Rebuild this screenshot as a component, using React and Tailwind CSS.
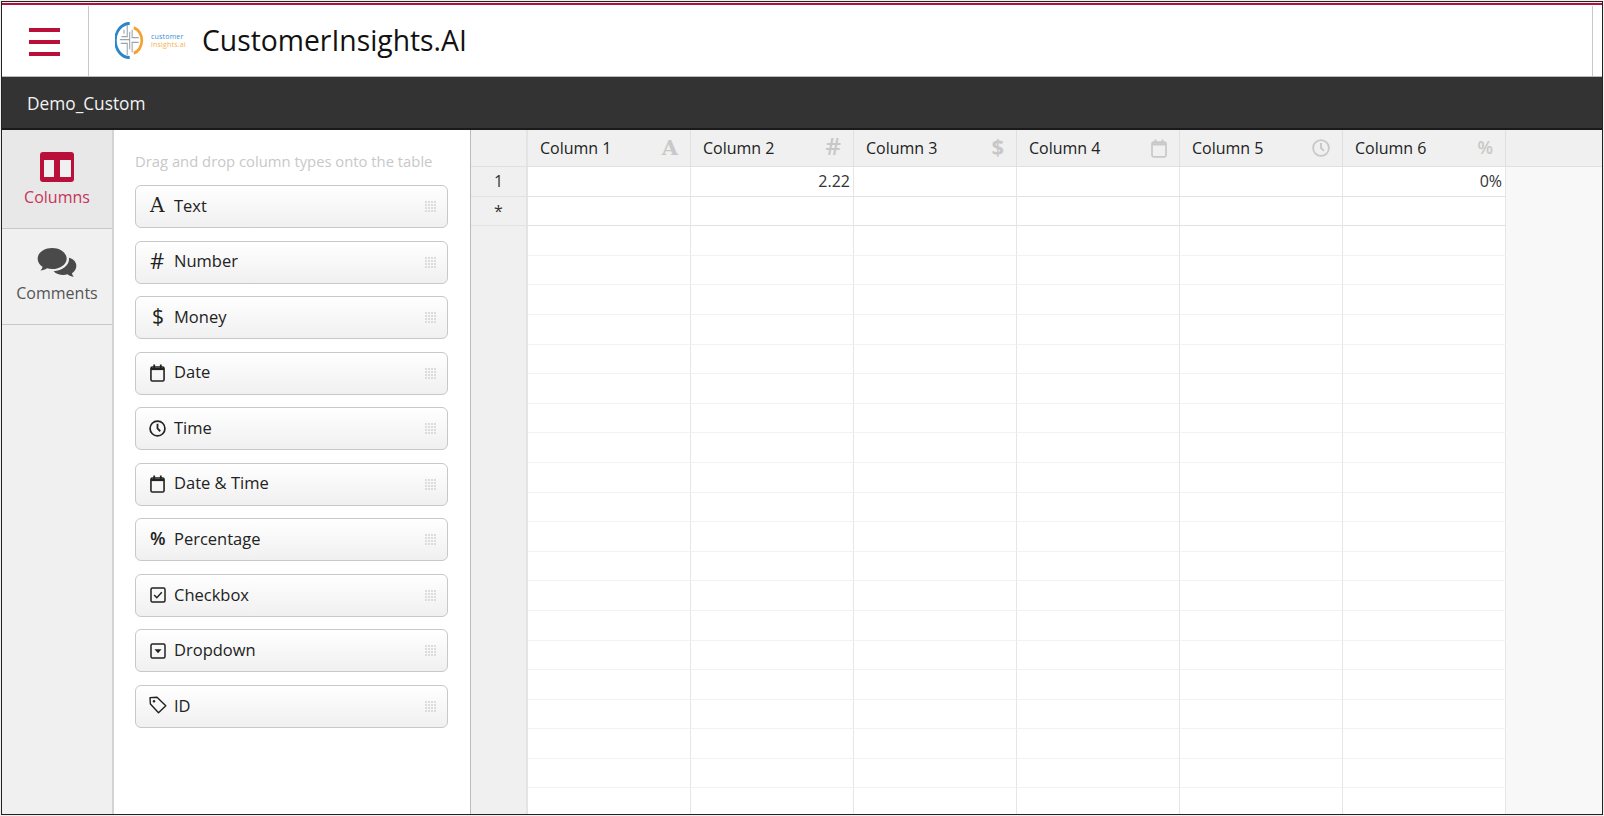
const FONT = "font-['Open_Sans',sans-serif]";

function CalendarIcon({ className }) {
  return (
    <svg viewBox="0 0 16 18" className={className} fill="none" preserveAspectRatio="none">
      <rect x="1" y="3" width="14" height="14" rx="1.5" stroke="currentColor" strokeWidth="1.7" />
      <path d="M1 5h14" stroke="currentColor" strokeWidth="2.2" />
      <path d="M4.5 0.500v3.500M11.500 0.500v3.500" stroke="currentColor" strokeWidth="1.9" />
    </svg>
  );
}

function ClockIcon({ className }) {
  return (
    <svg viewBox="0 0 16 16" className={className} fill="none">
      <circle cx="8" cy="8" r="7" stroke="currentColor" strokeWidth="1.6" />
      <path d="M8 3.600V8l2.600 2.600" stroke="currentColor" strokeWidth="1.700" />
    </svg>
  );
}

function CheckboxIcon({ className }) {
  return (
    <svg viewBox="0 0 16 16" className={className} fill="none">
      <rect x="1" y="1" width="14" height="14" rx="1.5" stroke="currentColor" strokeWidth="1.5" />
      <path d="M4.200 8l2.600 2.700 5-5.400" stroke="currentColor" strokeWidth="1.500" />
    </svg>
  );
}

function DropdownIcon({ className }) {
  return (
    <svg viewBox="0 0 16 16" className={className} fill="none">
      <rect x="1" y="1" width="14" height="14" rx="1.5" stroke="currentColor" strokeWidth="1.5" />
      <path d="M4.500 6.200h7L8 10.200z" fill="currentColor" />
    </svg>
  );
}

function TagIcon({ className }) {
  return (
    <svg viewBox="0 0 18 18" className={className} fill="none">
      <path d="M1 1.600L1.400 8 9.500 16.800 16.800 9.800 8 1.200z" stroke="currentColor" strokeWidth="1.400" strokeLinejoin="round" />
      <circle cx="5" cy="5.200" r="1.200" fill="currentColor" />
    </svg>
  );
}

function Grip() {
  const dots = [0, 3, 6, 9];
  return (
    <svg viewBox="0 0 11 11" className="w-[11px] h-[11px] text-[#dcdcdc]">
      {dots.map((y) =>
        dots.map((x) => <rect key={`${x}-${y}`} x={x} y={y} width="2" height="2" fill="currentColor" />)
      )}
    </svg>
  );
}

function Logo() {
  return (
    <div className="flex items-center w-[72px] h-[40px]">
      <svg viewBox="0 0 38 38" preserveAspectRatio="none" className="w-[31px] h-[37px] shrink-0" fill="none">
        <path d="M18 1.500A17.500 17.500 0 0 0 18 36.500" stroke="#2a85c9" strokeWidth="3.200" />
        <path d="M23 6A13.500 13.500 0 0 1 23 32" stroke="#f5a030" strokeWidth="3.200" />
        <path d="M15 3v12H8M21 8v8h8M15 34V22H7M21 31V21h8M11 8v4M6 18h12M18 10v18" stroke="#9aa3aa" strokeWidth="1.300" />
      </svg>
      <div className="ml-[5px] flex flex-col text-[7px] font-medium leading-[8px] tracking-[0.2px]">
        <span className="text-[#3a8fd0]">customer</span>
        <span className="text-[#f5b050]">insights.ai</span>
      </div>
    </div>
  );
}

const types = [
  { label: 'Text', icon: <span className="pb-[3px] font-['DejaVu_Serif',serif] text-[20px] leading-none">A</span> },
  { label: 'Number', icon: <span className="pb-[4px] text-[22px] leading-none">#</span> },
  { label: 'Money', icon: <span className="pl-[2px] pb-[3px] text-[21px] leading-none">$</span> },
  { label: 'Date', icon: <CalendarIcon className="w-[15px] h-[18px]" /> },
  { label: 'Time', icon: <ClockIcon className="-ml-[1px] w-[17px] h-[17px]" /> },
  { label: 'Date & Time', icon: <CalendarIcon className="w-[15px] h-[18px]" /> },
  { label: 'Percentage', icon: <span className="pb-[3px] text-[18px] leading-none font-semibold">%</span> },
  { label: 'Checkbox', icon: <CheckboxIcon className="w-[16px] h-[16px]" /> },
  { label: 'Dropdown', icon: <DropdownIcon className="w-[16px] h-[16px]" /> },
  { label: 'ID', icon: <TagIcon className="-ml-[1px] -mt-[2px] w-[18px] h-[18px]" /> },
];

const columns = [
  { name: 'Column 1', icon: <span className="pb-[2px] font-['DejaVu_Serif',serif] font-bold text-[21px] leading-none">A</span> },
  { name: 'Column 2', icon: <span className="pb-[4px] font-semibold text-[24px] leading-none">#</span> },
  { name: 'Column 3', icon: <span className="pb-[5px] font-bold text-[22px] leading-none">$</span> },
  { name: 'Column 4', icon: <CalendarIcon className="w-[16px] h-[19px]" /> },
  { name: 'Column 5', icon: <ClockIcon className="w-[18px] h-[18px]" /> },
  { name: 'Column 6', icon: <span className="pb-[3px] font-semibold text-[18px] leading-none">%</span> },
];

const rows = [
  { head: '1', cells: ['', '2.22', '', '', '', '0%'] },
  { head: '*', cells: ['', '', '', '', '', ''] },
  ...Array.from({ length: 20 }, () => ({ head: '', cells: ['', '', '', '', '', ''] })),
];

export default function App() {
  return (
    <div className={`w-[1604px] h-[816px] bg-[#f0f0f0] p-px overflow-hidden ${FONT}`}>
      <div className="h-full border border-[#222] flex flex-col bg-white overflow-hidden">
        <div className="h-[1px] bg-[#f0f0f0] shrink-0" />
        <div className="h-[2px] bg-[#b8103a] shrink-0" />

        <header className="h-[72px] shrink-0 bg-white border-b border-[#bbb] flex items-stretch">
          <div className="w-[87px] mt-[1px] border-r border-[#c8c8c8] flex items-center justify-center pr-[1px]">
            <div className="w-[31px] flex flex-col gap-[8px] mt-[1px]">
              <div className="h-[4px] bg-[#b8103a]" />
              <div className="h-[4px] bg-[#b8103a]" />
              <div className="h-[4px] bg-[#b8103a]" />
            </div>
          </div>
          <div className="flex-1 flex items-center pl-[26px]">
            <Logo />
            <h1 className="ml-[15px] text-[28.3px] leading-none font-medium text-[#111]">CustomerInsights.AI</h1>
          </div>
          <div className="w-[10px] mt-[1px] border-l border-[#c8c8c8]" />
        </header>

        <div className="h-[53px] shrink-0 bg-[#333] flex items-center pl-[25px] pt-[2px] text-[17.3px] text-[#f2f2f2] border-b-2 border-[#1a1a1a]">
          Demo_Custom
        </div>

        <div className="flex-1 flex min-h-0">
          <aside className="w-[112px] shrink-0 bg-[#f0f0f0] border-r-2 border-[#d4d4d4] flex flex-col">
            <div className="h-[99px] bg-[#e8e8e8] border-b border-[#c8c8c8] flex flex-col items-center pt-[22px]">
              <svg viewBox="0 0 34 30" className="w-[34px] h-[30px]">
                <rect width="34" height="30" rx="3" fill="#b8103a" />
                <rect x="4" y="8" width="10" height="17" fill="#f0f0f0" />
                <rect x="20" y="8" width="11" height="17" fill="#f0f0f0" />
              </svg>
              <span className="mt-[4px] text-[16px] leading-[22px] text-[#c5345a]">Columns</span>
            </div>
            <div className="h-[96px] border-b border-[#c8c8c8] flex flex-col items-center pt-[19px]">
              <svg viewBox="0 0 40 31" className="w-[40px] h-[30px] text-[#4a4a4a]">
                <path d="M15 0C6.700 0 0 4.900 0 11c0 3.400 2 6.300 5 8.300-.2 1.700-1.200 3-2.200 4 2.600-.2 5-1 6.800-2.400 1.700.5 3.500.8 5.400.8 8.300 0 15-4.900 15-10.700S23.300 0 15 0z" fill="currentColor" />
                <path d="M32 8.500c.3 1 .5 1.700.5 2.700 0 7-7 12.300-16 12.800 2.400 2.600 6.200 3.800 10 3.800 1.500 0 3-.2 4.300-.6 1.800 1.600 4.200 2.400 6.700 2.700-1-1.100-1.800-2.300-2-3.900 2.800-1.800 4.500-4.300 4.500-7.300 0-3.800-3-7.500-7.500-8.500z" fill="currentColor" />
              </svg>
              <span className="mt-[4px] text-[16px] leading-[22px] text-[#555]">Comments</span>
            </div>
          </aside>

          <section className="w-[357px] shrink-0 bg-white border-r border-[#bbb] pl-[21px] pr-[22px] pt-[22px]">
            <p className="text-[14.8px] leading-[19px] text-[#c8c8c8] whitespace-nowrap">
              Drag and drop column types onto the table
            </p>
            <div className="mt-[14px] flex flex-col gap-[12.55px]">
              {types.map((t) => (
                <div
                  key={t.label}
                  className="h-[43px] rounded-[6px] border border-[#c8c8c8] bg-gradient-to-b from-white to-[#f0f0f0] flex items-center pl-[14px] pr-[11px] text-[#222]"
                >
                  <span className="w-[24px] flex justify-start">{t.icon}</span>
                  <span className="flex-1 pb-[1px] text-[16.5px] font-medium leading-none">{t.label}</span>
                  <Grip />
                </div>
              ))}
            </div>
          </section>

          <section className="flex-1 min-w-0 bg-[#f8f8f8] overflow-hidden">
            <div className="h-[37px] flex bg-[#f0f0f0] border-b border-[#e0e0e0]">
              <div className="w-[57px] shrink-0 border-r-2 border-[#e4e4e4]" />
              {columns.map((c) => (
                <div
                  key={c.name}
                  className="w-[163px] shrink-0 border-r border-[#e0e0e0] flex items-center justify-between pl-[12px] pr-[12px] text-[16px] text-[#222]"
                >
                  <span>{c.name}</span>
                  <span className="flex justify-end text-[#c8c8c8]">{c.icon}</span>
                </div>
              ))}
            </div>
            {rows.map((r, i) => (
              <div key={i} className="h-[29.6px] flex">
                <div className={`w-[57px] shrink-0 bg-[#f0f0f0] border-r-2 border-[#e4e4e4] flex items-center justify-center text-[16px] text-[#333] leading-none ${i < 2 ? 'border-b border-b-[#e2e2e2]' : ''}`}>
                  {r.head}
                </div>
                {r.cells.map((v, j) => (
                  <div
                    key={j}
                    className={`w-[163px] shrink-0 bg-white border-r border-r-[#e6e6e6] border-b flex items-center justify-end pr-[3px] text-[16px] text-[#333] leading-none ${i < 2 ? 'border-b-[#e2e2e2]' : 'border-b-[#f2f2f2]'}`}
                  >
                    {v}
                  </div>
                ))}
              </div>
            ))}
          </section>
        </div>
      </div>
    </div>
  );
}
